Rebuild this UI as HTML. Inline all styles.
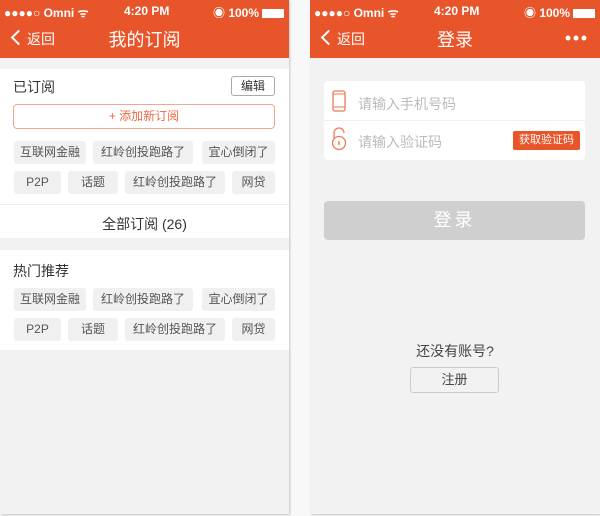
<!DOCTYPE html>
<html><head><meta charset="utf-8"><style>
*{margin:0;padding:0;box-sizing:border-box}
body{width:600px;height:516px;background:#f8f8f8;font-family:"Liberation Sans","Noto Sans CJK SC",sans-serif;position:relative;overflow:hidden}
.ph{position:absolute;top:0;height:514px;background:#f2f2f2;box-shadow:1px 1px 2px rgba(0,0,0,.2);overflow:hidden}
.hd{position:absolute;left:0;right:0;top:0;height:58px;background:#e8552a;color:#fff}
.sb{position:absolute;top:4px;font-size:12px;font-weight:bold;color:#fff}
.ttl{position:absolute;top:26px;width:100%;text-align:center;font-size:18px}
.back{position:absolute;left:13px;top:29px;font-size:14px}
.back:before{content:"";display:inline-block;width:9px;height:9px;border-left:2px solid #fff;border-bottom:2px solid #fff;transform:rotate(45deg);margin-right:3px;vertical-align:1px}
.sec{position:absolute;left:0;right:0;background:#fff}
.tag{position:absolute;height:23px;background:#f0f0f0;border-radius:3px;font-size:12px;color:#555;text-align:center;line-height:23px}
.a{position:absolute}
</style></head><body>
<div class="ph" style="left:0;width:289px">
 <div class="hd">
  <div class="sb" style="left:4px">●●●●○ Omni ᯤ</div>
  <div class="sb" style="left:124px">4:20 PM</div>
  <div class="sb" style="left:213px">◉ 100% <span style="display:inline-block;width:22px;height:9px;background:#fff;vertical-align:-1px"></span></div>
  <div class="back">返回</div>
  <div class="ttl">我的订阅</div>
 </div>
 <div class="sec" style="top:69px;height:169px">
  <div class="a" style="left:13px;top:8px;font-size:14px;color:#333">已订阅</div>
  <div class="a" style="left:231px;top:7px;width:44px;height:20px;border:1px solid #aaa;border-radius:3px;font-size:12px;text-align:center;line-height:18px;color:#333">编辑</div>
  <div class="a" style="left:13px;top:35px;width:262px;height:25px;border:1px solid #f3a88e;border-radius:4px;font-size:12px;text-align:center;line-height:23px;color:#ec6a45">+ 添加新订阅</div>
  <div class="tag" style="left:14px;top:72px;width:72px">互联网金融</div>
  <div class="tag" style="left:93px;top:72px;width:100px">红岭创投跑路了</div>
  <div class="tag" style="left:202px;top:72px;width:73px">宜心倒闭了</div>
  <div class="tag" style="left:14px;top:102px;width:47px">P2P</div>
  <div class="tag" style="left:68px;top:102px;width:50px">话题</div>
  <div class="tag" style="left:125px;top:102px;width:100px">红岭创投跑路了</div>
  <div class="tag" style="left:232px;top:102px;width:43px">网贷</div>
  <div class="a" style="left:0;right:0;top:135px;border-top:1px solid #eee"></div>
  <div class="a" style="left:0;right:0;top:145px;text-align:center;font-size:14px;color:#333">全部订阅 (26)</div>
 </div>
 <div class="sec" style="top:250px;height:100px">
  <div class="a" style="left:13px;top:11px;font-size:14px;color:#333">热门推荐</div>
  <div class="tag" style="left:14px;top:38px;width:72px">互联网金融</div>
  <div class="tag" style="left:93px;top:38px;width:100px">红岭创投跑路了</div>
  <div class="tag" style="left:202px;top:38px;width:73px">宜心倒闭了</div>
  <div class="tag" style="left:14px;top:68px;width:47px">P2P</div>
  <div class="tag" style="left:68px;top:68px;width:50px">话题</div>
  <div class="tag" style="left:125px;top:68px;width:100px">红岭创投跑路了</div>
  <div class="tag" style="left:232px;top:68px;width:43px">网贷</div>
 </div>
</div>
<div class="ph" style="left:310px;width:290px">
 <div class="hd">
  <div class="sb" style="left:4px">●●●●○ Omni ᯤ</div>
  <div class="sb" style="left:124px">4:20 PM</div>
  <div class="sb" style="left:214px">◉ 100% <span style="display:inline-block;width:22px;height:9px;background:#fff;vertical-align:-1px"></span></div>
  <div class="back">返回</div>
  <div class="ttl">登录</div>
  <svg class="a" style="right:13px;top:35px" width="22" height="6" viewBox="0 0 22 6"><circle cx="3" cy="3" r="2.5" fill="#fff"/><circle cx="11" cy="3" r="2.5" fill="#fff"/><circle cx="19" cy="3" r="2.5" fill="#fff"/></svg>
 </div>
 <div class="a" style="left:14px;top:81px;width:261px;height:79px;background:#fff;border-radius:4px">
  <svg class="a" style="left:8px;top:9px" width="14" height="22" viewBox="0 0 14 22"><rect x="1" y="1" width="12" height="20" rx="2" fill="none" stroke="#ee7a55" stroke-width="1.3"/><line x1="1" y1="4" x2="13" y2="4" stroke="#ee7a55"/><line x1="1" y1="17" x2="13" y2="17" stroke="#ee7a55"/></svg>
  <div class="a" style="left:34px;top:13px;font-size:14px;color:#bbb">请输入手机号码</div>
  <div class="a" style="left:0;right:0;top:39px;border-top:1px solid #eee"></div>
  <svg class="a" style="left:7px;top:46px" width="16" height="24" viewBox="0 0 16 24"><path d="M3 11V6a5 5 0 0 1 10 0" fill="none" stroke="#ee7a55" stroke-width="1.3"/><circle cx="8" cy="16" r="6.5" fill="none" stroke="#ee7a55" stroke-width="1.3"/><line x1="8" y1="14" x2="8" y2="18" stroke="#ee7a55" stroke-width="1.5"/></svg>
  <div class="a" style="left:34px;top:51px;font-size:14px;color:#bbb">请输入验证码</div>
  <div class="a" style="left:189px;top:50px;width:67px;height:19px;background:#e8552a;border-radius:2px;color:#fff;font-size:11px;text-align:center;line-height:19px">获取验证码</div>
 </div>
 <div class="a" style="left:14px;top:201px;width:261px;height:39px;background:#cfcfcf;border-radius:4px;color:#fff;font-size:18px;text-align:center;line-height:39px;letter-spacing:3px">登录</div>
 <div class="a" style="left:0;width:290px;top:341px;text-align:center;font-size:14px;color:#444">还没有账号?</div>
 <div class="a" style="left:100px;top:367px;width:89px;height:26px;border:1px solid #ccc;border-radius:3px;text-align:center;line-height:24px;font-size:13px;color:#444">注册</div>
</div>
</body></html>
